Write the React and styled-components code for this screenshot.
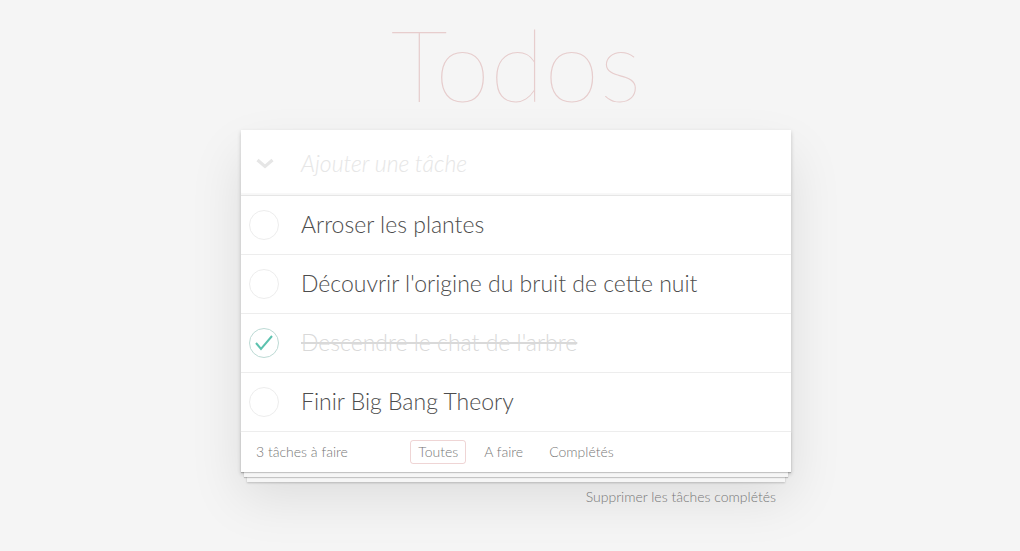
import React from 'react';
import styled, { createGlobalStyle } from 'styled-components';

const GlobalStyle = createGlobalStyle`
  html, body {
    margin: 0;
    padding: 0;
    background: #f5f5f5;
  }
  body {
    font-family: Lato, "Helvetica Neue", "Liberation Sans", sans-serif;
    font-weight: 300;
    color: #4d4d4d;
    -webkit-font-smoothing: antialiased;
  }
`;

const Page = styled.section`
  width: 550px;
  margin: 0 auto;
  padding: 13px 0 40px 12px;
`;

const Title = styled.h1`
  margin: 0;
  height: 117px;
  font-size: 100px;
  font-weight: 100;
  line-height: 100px;
  text-align: center;
  color: rgba(175, 47, 47, 0.2);
`;

const Card = styled.div`
  background: #fff;
  box-shadow: 0 2px 4px 0 rgba(0, 0, 0, 0.2), 0 25px 50px 0 rgba(0, 0, 0, 0.1);
`;

const Header = styled.div`
  display: flex;
  align-items: center;
  height: 65px;
  border-bottom: 1px solid #e6e6e6;
  box-shadow: inset 0 -2px 1px rgba(0, 0, 0, 0.03);
`;

const ToggleAll = styled.span`
  width: 60px;
  display: flex;
  justify-content: center;
  padding-right: 12px;
  box-sizing: border-box;
  padding-top: 2px;
`;

const Placeholder = styled.span`
  font-size: 23px;
  font-style: italic;
  font-weight: 300;
  color: #e6e6e6;
`;

const List = styled.ul`
  list-style: none;
  margin: 0;
  padding: 0;
`;

const Item = styled.li`
  display: flex;
  align-items: center;
  height: 58px;
  border-bottom: 1px solid #ededed;
`;

const Toggle = styled.span`
  width: 60px;
  padding-left: 8px;
  box-sizing: border-box;
  display: flex;
  align-items: center;
`;

const Circle = styled.span`
  width: 30px;
  height: 30px;
  border-radius: 50%;
  box-sizing: border-box;
  border: 1px solid ${(p) => (p.done ? '#bddad5' : '#ededed')};
  display: flex;
  align-items: center;
  justify-content: center;
`;

const Label = styled.span`
  font-size: 23px;
  line-height: 1.2;
  color: ${(p) => (p.done ? '#d9d9d9' : '#4d4d4d')};
  text-decoration: ${(p) => (p.done ? 'line-through' : 'none')};
`;

const Footer = styled.footer`
  position: relative;
  height: 20px;
  padding: 10px 15px;
  font-size: 14px;
  color: #777;
  display: flex;
  align-items: center;
  box-shadow: 0 1px 1px rgba(0, 0, 0, 0.2), 0 8px 0 -3px #f6f6f6,
    0 9px 1px -3px rgba(0, 0, 0, 0.2), 0 16px 0 -6px #f6f6f6,
    0 17px 2px -6px rgba(0, 0, 0, 0.2);
`;

const Count = styled.span`
  line-height: 20px;
`;

const Filters = styled.ul`
  position: absolute;
  left: 0;
  right: 0;
  top: 8px;
  margin: 0;
  padding: 0;
  list-style: none;
  display: flex;
  justify-content: center;
  gap: 10px;
  pointer-events: none;
`;

const Filter = styled.li`
  padding: 3px 7px;
  line-height: 16px;
  border-radius: 3px;
  border: 1px solid ${(p) => (p.selected ? 'rgba(175, 47, 47, 0.2)' : 'transparent')};
`;

const ClearRow = styled.div`
  display: flex;
  justify-content: flex-end;
  padding: 15px 15px 0 0;
  font-size: 14px;
  line-height: 20px;
  color: #777;
`;

const todos = [
  { text: 'Arroser les plantes', done: false },
  { text: "Découvrir l'origine du bruit de cette nuit", done: false },
  { text: "Descendre le chat de l'arbre", done: true },
  { text: 'Finir Big Bang Theory', done: false },
];

function Chevron() {
  return (
    <svg width="18" height="11" viewBox="0 0 18 11">
      <polyline
        points="1.5,2 9,8.5 16.5,2"
        fill="none"
        stroke="#e6e6e6"
        strokeWidth="3.2"
      />
    </svg>
  );
}

function Check() {
  return (
    <svg width="22" height="22" viewBox="0 0 22 22">
      <polyline
        points="3,11 8,17 19,4"
        fill="none"
        stroke="#5dc2af"
        strokeWidth="2"
      />
    </svg>
  );
}

export default function App() {
  return (
    <>
      <GlobalStyle />
      <Page>
        <Title>Todos</Title>
        <Card>
          <Header>
            <ToggleAll>
              <Chevron />
            </ToggleAll>
            <Placeholder>Ajouter une tâche</Placeholder>
          </Header>
          <List>
            {todos.map((todo) => (
              <Item key={todo.text}>
                <Toggle>
                  <Circle done={todo.done}>{todo.done && <Check />}</Circle>
                </Toggle>
                <Label done={todo.done}>{todo.text}</Label>
              </Item>
            ))}
          </List>
          <Footer>
            <Count>3 tâches à faire</Count>
            <Filters>
              <Filter selected>Toutes</Filter>
              <Filter>A faire</Filter>
              <Filter>Complétés</Filter>
            </Filters>
          </Footer>
        </Card>
        <ClearRow>Supprimer les tâches complétés</ClearRow>
      </Page>
    </>
  );
}
